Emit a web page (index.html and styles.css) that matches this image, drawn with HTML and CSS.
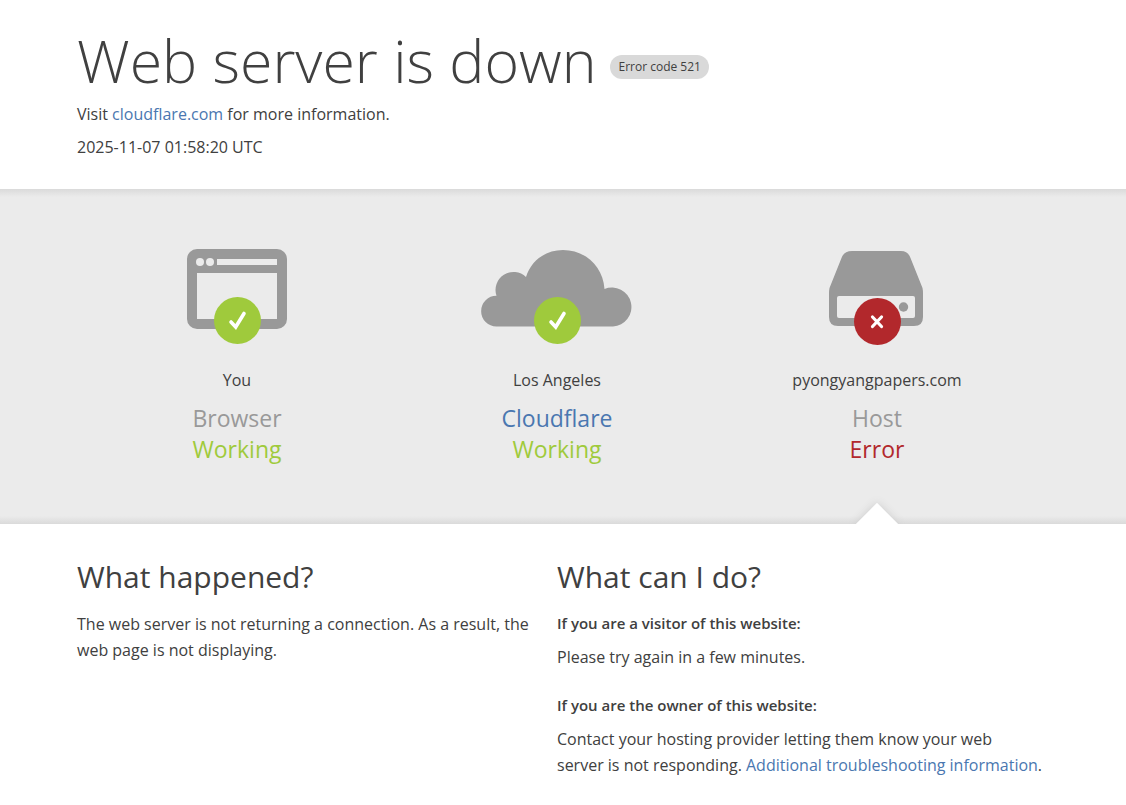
FILE: index.html
```html
<!DOCTYPE html>
<html lang="en">
<head>
  <meta charset="UTF-8" />
  <meta name="viewport" content="width=device-width, initial-scale=1.0">
  <title>pyongyangpapers.com | 521: Web server is down</title>
  <link rel="stylesheet" href="styles.css">
</head>
<body>
  <header class="container header">
    <div class="title-row">
      <h1>Web server is down</h1>
      <span class="error-code">Error code 521</span>
    </div>
    <p>Visit <a href="https://www.cloudflare.com/">cloudflare.com</a> for more information.</p>
    <p>2025-11-07 01:58:20 UTC</p>
  </header>

  <!-- Connection status -->
  <section class="status-band">
    <div class="container status-grid">
      <div class="status">
        <svg class="status-icon" width="160" height="96" viewBox="0 0 160 96" aria-hidden="true">
          <path fill="#999" fill-rule="evenodd" d="M40 0h80a10 10 0 0 1 10 10v60a10 10 0 0 1-10 10H40a10 10 0 0 1-10-10V10A10 10 0 0 1 40 0zM60 10v6h60v-6zM40 24v46h80V24z"/>
          <circle cx="43" cy="13" r="4" fill="#ebebeb"/>
          <circle cx="53" cy="13" r="4" fill="#ebebeb"/>
          <circle cx="80.500" cy="71.500" r="23.500" fill="#9fca3c"/>
          <path d="M74 73l4.700 5 8.300-13.500" fill="none" stroke="#fff" stroke-width="3.600" stroke-linecap="round"/>
        </svg>
        <span class="place">You</span>
        <h3>Browser</h3>
        <span class="state ok">Working</span>
      </div>
      <div class="status">
        <svg class="status-icon" width="160" height="96" viewBox="0 0 160 96" aria-hidden="true">
          <path fill="#999" d="M19.500 77.500a15.300 15.300 0 0 1 0-30.700 A18 18 0 0 1 49 28 C54 12 68 1 86 1 C108 1 126 17 127.500 40 A19.500 19.500 0 1 1 136 77.500z"/>
          <circle cx="80.500" cy="71.500" r="23.500" fill="#9fca3c"/>
          <path d="M74 73l4.700 5 8.300-13.500" fill="none" stroke="#fff" stroke-width="3.600" stroke-linecap="round"/>
        </svg>
        <span class="place">Los Angeles</span>
        <h3><a href="https://www.cloudflare.com/">Cloudflare</a></h3>
        <span class="state ok">Working</span>
      </div>
      <div class="status failed">
        <svg class="status-icon" width="160" height="96" viewBox="0 0 160 96" aria-hidden="true">
          <path fill="#999" d="M55 2h49q7 0 9.500 7l12 30q.5 2 .5 6v23q0 9-9 9H41q-9 0-9-9V45q0-4 .5-6l12-30Q47 2 55 2z"/>
          <rect x="40" y="47" width="78" height="22" rx="2" fill="#ebebeb"/>
          <circle cx="106.500" cy="58" r="4.700" fill="#999"/>
          <circle cx="80.500" cy="72.500" r="23.500" fill="#b2282c"/>
          <path d="M75.500 68l9 9.500M84.500 68l-9 9.500" stroke="#fff" stroke-width="3.200" stroke-linecap="round"/>
        </svg>
        <span class="place">pyongyangpapers.com</span>
        <h3>Host</h3>
        <span class="state error">Error</span>
      </div>
    </div>
  </section>

  <!-- Explanation -->
  <main class="container details">
    <section>
      <h2>What happened?</h2>
      <p>The web server is not returning a connection. As a result, the web page is not displaying.</p>
    </section>
    <section>
      <h2>What can I do?</h2>
      <h4>If you are a visitor of this website:</h4>
      <p class="visitor-text">Please try again in a few minutes.</p>
      <h4>If you are the owner of this website:</h4>
      <p>Contact your hosting provider letting them know your web server&nbsp;is not responding. <a href="https://developers.cloudflare.com/support/troubleshooting/">Additional troubleshooting information</a>.</p>
    </section>
  </main>
</body>
</html>
```
FILE: styles.css
```css
* {
  box-sizing: border-box;
}

body {
  margin: 0;
  background: #fff;
  color: #404040;
  font-family: "Open Sans", "Noto Sans", sans-serif;
  font-size: 16px;
  line-height: 26px;
}

h1, h2, h3, h4, p {
  margin: 0;
}

a {
  color: #4a77b0;
  text-decoration: none;
}

a:hover {
  text-decoration: underline;
}

.container {
  max-width: 972px;
  margin: 0 auto;
  padding-right: 12px;
}

.header {
  padding-top: 30px;
  padding-bottom: 29px;
}

.title-row {
  display: flex;
  flex-wrap: wrap;
  align-items: center;
  column-gap: 14px;
  margin-bottom: 11px;
}

h1 {
  font-size: 59px;
  font-weight: 300;
  line-height: 60px;
}

.error-code {
  margin-top: 14px;
  padding: 0 8px;
  border-radius: 12px;
  background: #d9d9d9;
  font-size: 12px;
  line-height: 24px;
}

.header p + p {
  margin-top: 7px;
}

.status-band {
  background:
    linear-gradient(to bottom, #dadada, #ebebeb) top / 100% 8px no-repeat,
    linear-gradient(to top, #dadada, #ebebeb) bottom / 100% 8px no-repeat,
    #ebebeb;
}

.status-grid {
  display: grid;
  grid-template-columns: repeat(3, 1fr);
}

.status {
  position: relative;
  display: flex;
  flex-direction: column;
  align-items: center;
  overflow: hidden;
  padding: 60px 0 59px;
  text-align: center;
}

.status-icon {
  margin-bottom: 22px;
}

.place {
  margin-bottom: 10px;
}

h3, .state {
  font-size: 23px;
  font-weight: 400;
  line-height: 31px;
}

h3 {
  color: #999;
}

.ok {
  color: #9fca3c;
}

.error {
  color: #b2282c;
}

/* white notch pointing at the broken part */
.failed::after {
  content: "";
  position: absolute;
  bottom: -15px;
  left: 50%;
  width: 30px;
  height: 30px;
  margin-left: -15px;
  background: #fff;
  box-shadow: 0 0 8px #ccc;
  transform: rotate(45deg);
}

.details {
  display: grid;
  grid-template-columns: repeat(2, 1fr);
  padding-top: 33px;
  padding-bottom: 26px;
}

.details section:first-child {
  padding-right: 24px;
}

.details section:last-child {
  margin-right: -8px;
}

h2 {
  margin-bottom: 14px;
  font-size: 30px;
  font-weight: 400;
  line-height: 40px;
}

h4 {
  margin-bottom: 9px;
  font-size: 15px;
  font-weight: 600;
  line-height: 24px;
}

.visitor-text {
  margin-bottom: 23px;
}
```
